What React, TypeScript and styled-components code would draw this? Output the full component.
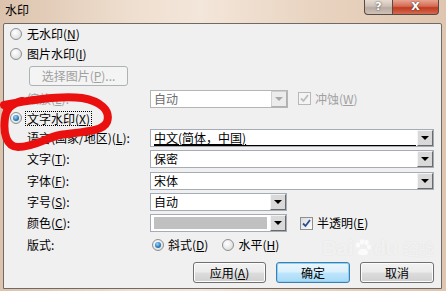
import React from "react";
import styled, { createGlobalStyle, css } from "styled-components";

const GlobalStyle = createGlobalStyle`
  html, body {
    margin: 0;
    padding: 0;
  }
  body {
    width: 446px;
    height: 291px;
    overflow: hidden;
    font-family: "Noto Sans CJK SC", "Noto Sans", sans-serif;
    font-size: 12px;
    color: #000;
  }
`;

const Frame = styled.div`
  position: relative;
  width: 446px;
  height: 291px;
  overflow: hidden;
  background: linear-gradient(90deg, #dcc3ad 0%, #efdfd0 30%, #f3e6da 45%, #e9d4c1 70%, #dfc6b0 100%);
`;

const TitleBar = styled.div`
  display: flex;
  align-items: flex-start;
  height: 23px;
`;

const Title = styled.div`
  padding: 3px 0 0 5px;
  font-size: 12px;
  line-height: 14px;
`;

const Caption = styled.div`
  display: flex;
  margin-left: auto;
  margin-right: 7px;
`;

const CapBtn = styled.div<{ $close?: boolean }>`
  display: flex;
  align-items: center;
  justify-content: center;
  height: 14px;
  width: ${(p) => (p.$close ? 45 : 27)}px;
  border: 1px solid #5a4a44;
  border-top: none;
  color: #fff;
  font-family: "DejaVu Sans", sans-serif;
  font-weight: bold;
  font-size: 11px;
  line-height: 12px;
  text-shadow: 0 0 2px #333;
  ${(p) =>
    p.$close
      ? css`
          border-radius: 0 0 4px 0;
          border-left: none;
          background: linear-gradient(#e8a493 0%, #d46a52 45%, #c03a1f 55%, #d46a52 100%);
        `
      : css`
          border-radius: 0 0 0 4px;
          background: linear-gradient(#e8dcd2 0%, #cdbfb4 45%, #b8aaa0 55%, #cfc2b8 100%);
        `}
`;

const Client = styled.div`
  box-sizing: border-box;
  margin-left: 3px;
  width: 439px;
  height: 266px;
  border: 1px solid #6f6a66;
  border-radius: 2px 2px 0 0;
  background: #f0f0f0;
  padding: 0 7px 0 6px;
  display: flex;
  flex-direction: column;
`;

const Row = styled.div<{ $h: number }>`
  display: grid;
  grid-template-columns: 17px 123px 1fr;
  align-items: center;
  height: ${(p) => p.$h}px;
`;

const Label = styled.span<{ $disabled?: boolean; $span?: boolean }>`
  grid-column: ${(p) => (p.$span ? "2 / 4" : "2")};
  line-height: 14px;
  white-space: nowrap;
  color: ${(p) => (p.$disabled ? "#a0a0a0" : "#000")};
`;

const Focus = styled.span`
  grid-column: 2 / 4;
  justify-self: start;
  margin-left: -1px;
  padding: 0 1px;
  line-height: 13px;
  outline: 1px dotted #000;
`;

const Acc = styled.span`
  text-decoration: underline;
`;

const Control = styled.div`
  grid-column: 3;
  display: flex;
  align-items: center;
`;

const RadioDot = styled.span<{ $checked?: boolean }>`
  position: relative;
  box-sizing: border-box;
  width: 12px;
  height: 12px;
  border-radius: 50%;
  border: 1px solid #8d8f91;
  background: radial-gradient(circle at 40% 35%, #ffffff 0%, #e6e6e6 60%, #cfcfcf 100%);
  flex: none;
  ${(p) =>
    p.$checked &&
    css`
      &::after {
        content: "";
        position: absolute;
        left: 2px;
        top: 2px;
        width: 6px;
        height: 6px;
        border-radius: 50%;
        background: radial-gradient(circle at 40% 35%, #9fd8f5 0%, #2b7fc0 55%, #0d4a80 100%);
      }
    `}
`;

const CheckBox = styled.span<{ $disabled?: boolean }>`
  display: flex;
  align-items: center;
  justify-content: center;
  box-sizing: border-box;
  width: 13px;
  height: 13px;
  border: 1px solid ${(p) => (p.$disabled ? "#b8b8b8" : "#8e8f8f")};
  background: ${(p) => (p.$disabled ? "#f4f4f4" : "linear-gradient(135deg, #dcdcdc, #fdfdfd)")};
  flex: none;
`;

const CheckText = styled.span<{ $disabled?: boolean }>`
  margin-left: 4px;
  line-height: 14px;
  white-space: nowrap;
  color: ${(p) => (p.$disabled ? "#a0a0a0" : "#000")};
`;

const ComboBox = styled.div<{ $w?: number; $disabled?: boolean }>`
  box-sizing: border-box;
  display: flex;
  align-items: center;
  height: 18px;
  width: ${(p) => (p.$w ? `${p.$w}px` : "100%")};
  border: 1px solid ${(p) => (p.$disabled ? "#b5b5b5" : "#a5acb5")};
  background: #fff;
  color: ${(p) => (p.$disabled ? "#6d6d6d" : "#000")};
  padding-left: 3px;
`;

const ComboText = styled.span<{ $sel?: boolean }>`
  flex: 1;
  align-self: stretch;
  display: flex;
  align-items: center;
  line-height: 14px;
  white-space: nowrap;
  ${(p) =>
    p.$sel &&
    css`
      text-decoration: underline;
      box-shadow: inset 0 -1px 0 #000;
      margin-right: 1px;
    `}
`;

const Swatch = styled.span`
  flex: 1;
  height: 12px;
  margin-right: 3px;
  background: #c0c0c0;
`;

const DropBtn = styled.span<{ $disabled?: boolean }>`
  display: flex;
  align-items: center;
  justify-content: center;
  box-sizing: border-box;
  width: 16px;
  height: 16px;
  border: 1px solid;
  border-color: ${(p) => (p.$disabled ? "#d0d0d0 #b0b0b0 #b0b0b0 #d0d0d0" : "#f4f4f4 #6a6a6a #6a6a6a #f4f4f4")};
  background: ${(p) => (p.$disabled ? "#ececec" : "#d9d9d9")};
  flex: none;
  &::after {
    content: "";
    border-left: 4px solid transparent;
    border-right: 4px solid transparent;
    border-top: 4px solid ${(p) => (p.$disabled ? "#a8a8a8" : "#000")};
  }
`;

const PushButton = styled.button<{ $primary?: boolean; $w?: number }>`
  box-sizing: border-box;
  width: ${(p) => p.$w ?? 74}px;
  height: 21px;
  padding: 0;
  border-radius: 3px;
  font-family: inherit;
  font-size: 12px;
  line-height: 14px;
  color: #000;
  border: 1px solid ${(p) => (p.$primary ? "#3c7fb1" : "#707070")};
  background: ${(p) =>
    p.$primary
      ? "linear-gradient(#eaf6fd 0%, #d9f0fc 48%, #bee6fd 52%, #a7d9f5 100%)"
      : "linear-gradient(#f2f2f2 0%, #ebebeb 48%, #dddddd 52%, #cfcfcf 100%)"};
  box-shadow: inset 0 0 0 1px ${(p) => (p.$primary ? "#8fd1f5" : "#fcfcfc")};
  &:disabled {
    color: #a0a0a0;
    border-color: #adb2b5;
    background: #f4f4f4;
    box-shadow: none;
  }
`;

const PicButton = styled(PushButton)`
  grid-column: 2 / 4;
  justify-self: start;
  margin-left: 2px;
  height: 20px;
`;

const ButtonBar = styled.div`
  display: flex;
  justify-content: flex-end;
  gap: 10px;
  padding-top: 7px;
`;

const Scribble = styled.svg`
  position: absolute;
  left: 0;
  top: 0;
  pointer-events: none;
`;

const Watermark = styled.div`
  position: absolute;
  left: 322px;
  top: 236px;
  display: flex;
  align-items: center;
  color: rgba(255, 255, 255, 0.62);
  font-family: "Liberation Sans", sans-serif;
  font-weight: bold;
  font-size: 21px;
  letter-spacing: -0.5px;
  text-shadow: 0 0 1px rgba(200, 200, 200, 0.5);
  pointer-events: none;
`;

const WmCn = styled.span`
  margin-left: 5px;
  font-family: "Noto Sans CJK SC", sans-serif;
  font-size: 16px;
  font-weight: normal;
`;

const Check = ({ light }: { light?: boolean }) => (
  <svg width="9" height="9" viewBox="0 0 9 9">
    <path d="M1 4.5 L3.5 7 L8 1" fill="none" stroke={light ? "#bdbdbd" : "#2a4f92"} strokeWidth="1.8" />
  </svg>
);

const Paw = () => (
  <svg width="20" height="20" viewBox="0 0 20 20" fill="rgba(255,255,255,0.7)">
    <ellipse cx="5" cy="7" rx="2.2" ry="2.8" />
    <ellipse cx="9" cy="4" rx="2.2" ry="2.8" />
    <ellipse cx="13.5" cy="4.5" rx="2.2" ry="2.8" />
    <ellipse cx="16" cy="9" rx="2" ry="2.5" />
    <path d="M5 15 C5 10, 15 9, 15 15 C15 18, 5 18, 5 15 Z" />
  </svg>
);

const App = () => {
  return (
    <Frame>
      <GlobalStyle />
      <TitleBar>
        <Title>水印</Title>
        <Caption>
          <CapBtn>?</CapBtn>
          <CapBtn $close>X</CapBtn>
        </Caption>
      </TitleBar>
      <Client>
        <Row $h={20}>
          <RadioDot />
          <Label $span>
            无水印(<Acc>N</Acc>)
          </Label>
        </Row>
        <Row $h={19}>
          <RadioDot />
          <Label $span>
            图片水印(<Acc>I</Acc>)
          </Label>
        </Row>
        <Row $h={25}>
          <PicButton $w={99} disabled>
            选择图片(<Acc>P</Acc>)...
          </PicButton>
        </Row>
        <Row $h={21}>
          <Label $disabled>
            缩放(<Acc>L</Acc>):
          </Label>
          <Control>
            <ComboBox $w={138} $disabled>
              <ComboText>自动</ComboText>
              <DropBtn $disabled />
            </ComboBox>
            <CheckBox $disabled style={{ marginLeft: 10 }}>
              <Check light />
            </CheckBox>
            <CheckText $disabled>
              冲蚀(<Acc>W</Acc>)
            </CheckText>
          </Control>
        </Row>
        <Row $h={18}>
          <RadioDot $checked />
          <Focus>
            文字水印(<Acc>X</Acc>)
          </Focus>
        </Row>
        <Row $h={21}>
          <Label>
            语言(国家/地区)(<Acc>L</Acc>):
          </Label>
          <Control>
            <ComboBox>
              <ComboText $sel>中文(简体，中国)</ComboText>
              <DropBtn />
            </ComboBox>
          </Control>
        </Row>
        <Row $h={22}>
          <Label>
            文字(<Acc>T</Acc>):
          </Label>
          <Control>
            <ComboBox>
              <ComboText>保密</ComboText>
              <DropBtn />
            </ComboBox>
          </Control>
        </Row>
        <Row $h={21}>
          <Label>
            字体(<Acc>F</Acc>):
          </Label>
          <Control>
            <ComboBox>
              <ComboText>宋体</ComboText>
              <DropBtn />
            </ComboBox>
          </Control>
        </Row>
        <Row $h={21}>
          <Label>
            字号(<Acc>S</Acc>):
          </Label>
          <Control>
            <ComboBox $w={137}>
              <ComboText>自动</ComboText>
              <DropBtn />
            </ComboBox>
          </Control>
        </Row>
        <Row $h={22}>
          <Label>
            颜色(<Acc>C</Acc>):
          </Label>
          <Control>
            <ComboBox $w={137}>
              <Swatch />
              <DropBtn />
            </ComboBox>
            <CheckBox style={{ marginLeft: 13 }}>
              <Check />
            </CheckBox>
            <CheckText>
              半透明(<Acc>E</Acc>)
            </CheckText>
          </Control>
        </Row>
        <Row $h={21}>
          <Label>版式:</Label>
          <Control>
            <RadioDot $checked style={{ marginLeft: 2 }} />
            <CheckText>
              斜式(<Acc>D</Acc>)
            </CheckText>
            <RadioDot style={{ marginLeft: 14 }} />
            <CheckText>
              水平(<Acc>H</Acc>)
            </CheckText>
          </Control>
        </Row>
        <ButtonBar>
          <PushButton $w={73}>
            应用(<Acc>A</Acc>)
          </PushButton>
          <PushButton $primary>确定</PushButton>
          <PushButton>取消</PushButton>
        </ButtonBar>
      </Client>
      <Watermark>
        Bai
        <Paw />
        du
        <WmCn>经验</WmCn>
      </Watermark>
      <Scribble width="446" height="291" viewBox="0 0 446 291">
        <path
          d="M4 105 C30 100, 60 95, 82 98 C100 101, 111 110, 107 122 C103 132, 80 132, 60 135 C45 138, 35 147, 18 147 C6 147, 3 132, 5 118 C6 110, 10 104, 22 101"
          fill="none"
          stroke="#ea1010"
          strokeWidth="8"
          strokeLinecap="round"
          strokeLinejoin="round"
        />
      </Scribble>
    </Frame>
  );
};

export default App;
